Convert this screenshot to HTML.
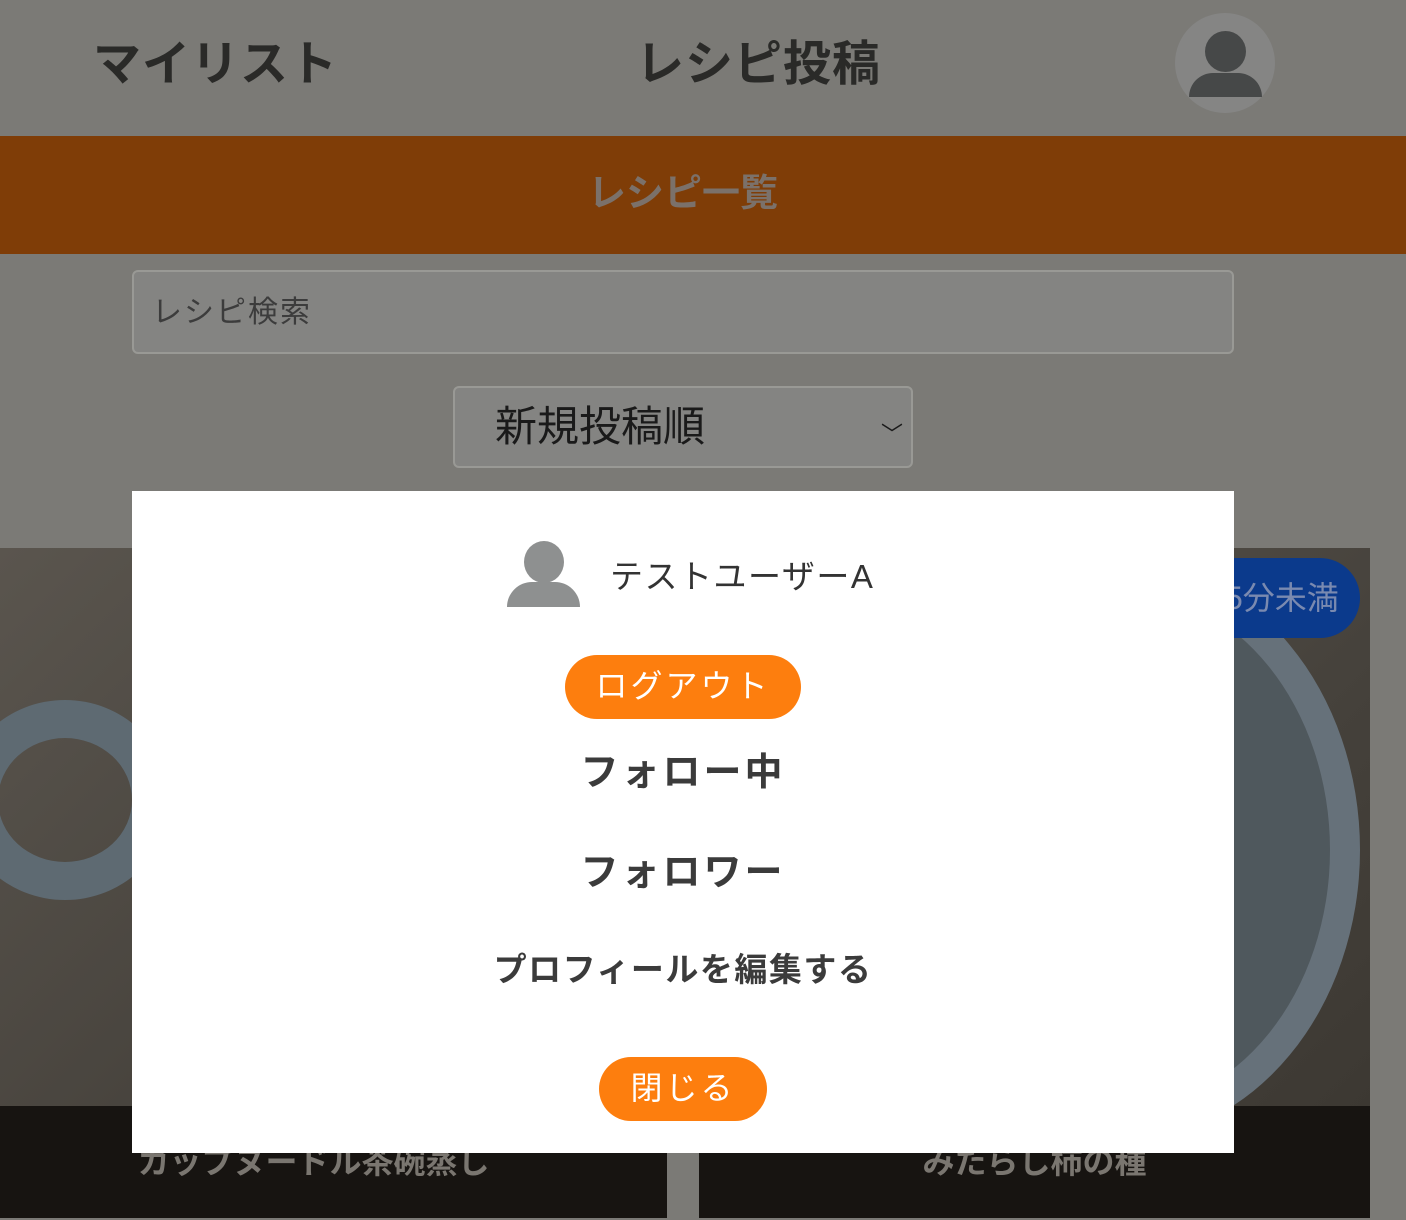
<!DOCTYPE html>
<html><head><meta charset="utf-8"><style>
*{margin:0;padding:0;box-sizing:border-box}
body{width:1406px;height:1220px;background:#7b7a76;position:relative;overflow:hidden;font-family:"Liberation Sans","Noto Sans CJK JP",sans-serif}
.a{position:absolute}
.nav{font-size:48px;font-weight:bold;color:#2a2a28;top:24px;letter-spacing:1px}
.card{background:linear-gradient(135deg,#5a554e,#45413b 60%,#3a3630);}
.cap{background:#171411;color:#7a7670;font-size:32px;font-weight:bold;text-align:center;line-height:112px}
.btn{background:#fd7e0e;color:#fff;border-radius:32px;text-align:center;font-size:32px;letter-spacing:3px}
.item{left:132px;width:1102px;text-align:center;color:#3b3b3b;font-weight:bold;letter-spacing:3px}
</style></head><body>
<div class="a nav" style="left:93px">マイリスト</div>
<div class="a nav" style="left:636px">レシピ投稿</div>
<div class="a" style="left:1175px;top:13px;width:100px;height:100px;border-radius:50%;background:#858584"></div>
<div class="a" style="left:1205px;top:31px;width:41px;height:41px;border-radius:50%;background:#464848"></div>
<div class="a" style="left:1189px;top:73px;width:73px;height:24px;border-radius:36px 36px 0 0;background:#464848"></div>
<div class="a" style="left:0;top:136px;width:1406px;height:118px;background:#7f3d07;color:#7b716a;font-size:38px;font-weight:bold;text-align:center;line-height:116px;padding-right:40px">レシピ一覧</div>
<div class="a" style="left:132px;top:270px;width:1102px;height:84px;border:2px solid #999995;border-radius:6px;background:#848482;color:#3c3c3c;font-size:30px;line-height:82px;padding-left:18px;letter-spacing:2px">レシピ検索</div>
<div class="a" style="left:453px;top:386px;width:460px;height:82px;border:2px solid #999995;border-radius:6px;background:#848482;color:#1a1a1a;font-size:42px;line-height:78px;padding-left:40px">新規投稿順<span class="a" style="right:8px;top:8px;font-size:22px">﹀</span></div>
<div class="a card" style="left:0;top:548px;width:667px;height:670px"></div>
<div class="a" style="left:-40px;top:700px;width:210px;height:200px;border-radius:50%;border:38px solid #5e6a72"></div>
<div class="a cap" style="left:0;top:1106px;width:667px;height:112px;padding-right:40px">カップヌードル茶碗蒸し</div>
<div class="a card" style="left:699px;top:548px;width:671px;height:670px"></div>
<div class="a" style="left:880px;top:560px;width:480px;height:580px;border-radius:50%;border:30px solid #66717a;background:#4f585d"></div>
<div class="a cap" style="left:699px;top:1106px;width:671px;height:112px">みたらし柿の種</div>
<div class="a" style="left:1180px;top:558px;width:180px;height:80px;border-radius:40px;background:#0b3a8c;color:#7a8ab0;font-size:32px;line-height:80px;padding-left:45px">5分未満</div>
<div class="a" style="left:132px;top:491px;width:1102px;height:662px;background:#fff"></div>
<div class="a" style="left:524px;top:541px;width:40px;height:42px;border-radius:50%;background:#8e9090"></div>
<div class="a" style="left:507px;top:582px;width:73px;height:25px;border-radius:30px 30px 0 0;background:#8e9090"></div>
<div class="a" style="left:610px;top:550px;font-size:33px;color:#333;letter-spacing:1.5px">テストユーザーA</div>
<div class="a btn" style="left:565px;top:655px;width:236px;height:64px;line-height:62px">ログアウト</div>
<div class="a item" style="top:741px;font-size:38px">フォロー中</div>
<div class="a item" style="top:841px;font-size:38px">フォロワー</div>
<div class="a item" style="top:943px;font-size:33px;letter-spacing:1.5px">プロフィールを編集する</div>
<div class="a btn" style="left:599px;top:1057px;width:168px;height:64px;line-height:62px">閉じる</div>
</body></html>
